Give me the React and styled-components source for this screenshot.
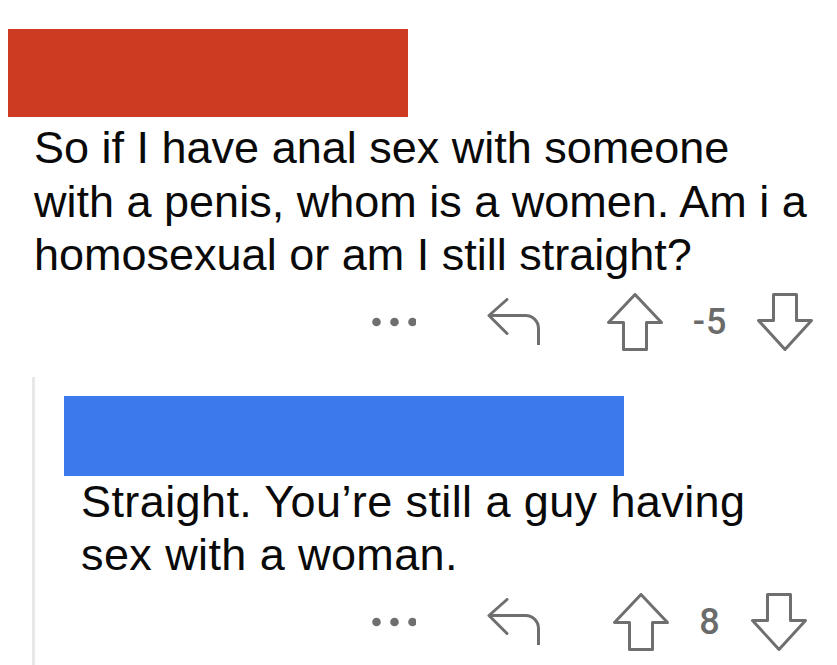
import React from "react"
import styled, { createGlobalStyle } from "styled-components"

const GlobalStyle = createGlobalStyle`
  html, body {
    margin: 0;
    padding: 0;
    background: #ffffff;
  }
  body {
    font-family: "Liberation Sans", Arial, sans-serif;
    color: #0a0a0a;
  }
`

const Page = styled.div`
  width: 837px;
  height: 665px;
  overflow: hidden;
  padding-top: 29px;
  box-sizing: border-box;
`

const Redaction = styled.div`
  width: ${(p) => p.$width}px;
  height: ${(p) => p.$height}px;
  margin-left: ${(p) => p.$offset || 0}px;
  background: ${(p) => p.$color};
`

const Body = styled.p`
  margin: ${(p) => p.$top}px 0 0 ${(p) => p.$indent}px;
  max-width: ${(p) => p.$maxWidth}px;
  font-size: 45px;
  line-height: 53.5px;
  font-weight: 400;
  letter-spacing: ${(p) => p.$tracking || 0}px;
`

const ActionBar = styled.div`
  display: flex;
  align-items: center;
  justify-content: flex-end;
  height: 56px;
  margin-top: ${(p) => p.$top}px;
  padding-right: 7px;
  color: #6f6f6f;
`

const MoreButton = styled.span`
  display: flex;
  width: 44px;
  margin-right: 71px;
`

const ReplyButton = styled.span`
  display: flex;
  margin-right: 49px;
`

const VoteGroup = styled.div`
  display: flex;
  align-items: center;
  justify-content: center;
  gap: 30px;
  width: 240px;
`

const Score = styled.span`
  font-family: Roboto, "Liberation Sans", sans-serif;
  font-size: 36px;
  font-weight: 500;
  line-height: 1;
  color: #6b6b6b;
  letter-spacing: 1px;
`

const Thread = styled.div`
  margin: 27px 0 0 32px;
  border-left: 3px solid #e8e8e8;
  padding: 19px 0 20px 29px;
`

const Dots = () => (
  <svg width="44" height="10" viewBox="0 0 44 10">
    <circle cx="4.5" cy="5" r="4.3" fill="currentColor" />
    <circle cx="22.5" cy="5" r="4.3" fill="currentColor" />
    <circle cx="40.5" cy="5" r="4.3" fill="currentColor" />
  </svg>
)

const ReplyIcon = () => (
  <svg width="54" height="47" viewBox="0 0 54 47" fill="none" stroke="currentColor" strokeWidth="3" strokeLinejoin="round">
    <path d="M20 1.5 L2 17.5 L20 35.5" strokeLinecap="round" />
    <path d="M2 17.5 H38 A13 13 0 0 1 51.5 30.5 V47" />
  </svg>
)

const UpIcon = () => (
  <svg width="56" height="58" viewBox="0 0 56 58" fill="none" stroke="currentColor" strokeWidth="3" strokeLinejoin="round">
    <path d="M28 1.5 L1.5 29.5 H16.5 V56.5 H39.5 V29.5 H54.5 Z" />
  </svg>
)

const DownIcon = () => (
  <svg width="56" height="58" viewBox="0 0 56 58" fill="none" stroke="currentColor" strokeWidth="3" strokeLinejoin="round">
    <path d="M28 56.5 L1.5 27.5 H16.5 V1.5 H39.5 V27.5 H54.5 Z" />
  </svg>
)

const Actions = ({ score, top }) => (
  <ActionBar $top={top}>
    <MoreButton>
      <Dots />
    </MoreButton>
    <ReplyButton>
      <ReplyIcon />
    </ReplyButton>
    <VoteGroup>
      <UpIcon />
      <Score>{score}</Score>
      <DownIcon />
    </VoteGroup>
  </ActionBar>
)

const App = () => (
  <>
    <GlobalStyle />
    <Page>
      <Redaction $width={400} $height={88} $offset={8} $color="#cd3b23" />
      <Body $top={4} $indent={34} $maxWidth={783}>
        So if I have anal sex with someone with a penis, whom is a women. Am i a
        homosexual or am I still straight?
      </Body>
      <Actions score="-5" top={12} />
      <Thread>
        <Redaction $width={560} $height={80} $color="#3c7aec" />
        <Body $top={-1} $indent={17} $maxWidth={705} $tracking={0.4}>
          Straight. You’re still a guy having sex with a woman.
        </Body>
        <Actions score="8" top={12} />
      </Thread>
    </Page>
  </>
)

export default App
